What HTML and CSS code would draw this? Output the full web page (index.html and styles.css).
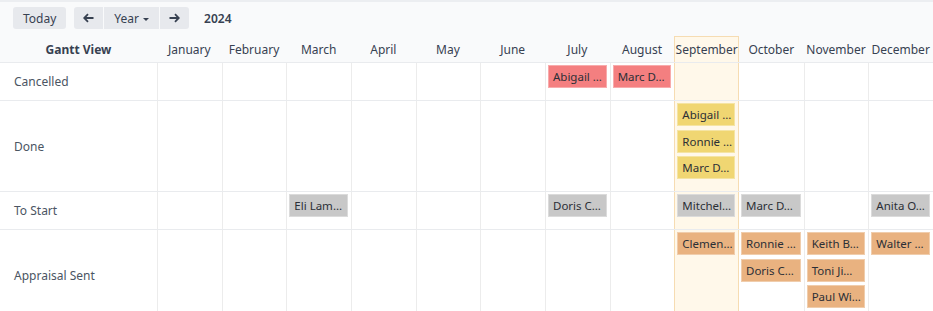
FILE: index.html
```html
<!DOCTYPE html>
<html lang="en">
<head>
  <meta charset="UTF-8" />
  <meta name="viewport" content="width=device-width, initial-scale=1" />
  <title>Gantt View</title>
  <link rel="stylesheet" href="styles.css">
</head>
<body>

<div class="toolbar">
  <button class="btn">Today</button>
  <div class="btn-group">
    <button class="btn btn-arrow">
      <svg width="11" height="10" viewBox="0 0 11 10"><path d="M10.5 5H1.5M5 1.2L1.2 5 5 8.8" fill="none" stroke="#374151" stroke-width="1.8"/></svg>
    </button>
    <button class="btn">Year <span class="caret"></span></button>
    <button class="btn btn-arrow">
      <svg width="11" height="10" viewBox="0 0 11 10"><path d="M0.5 5H9.5M6 1.2L9.8 5 6 8.8" fill="none" stroke="#374151" stroke-width="1.8"/></svg>
    </button>
  </div>
  <span class="period">2024</span>
</div>

<div class="gantt">
  <div class="row head">
    <div class="cell title">Gantt View</div>
    <div class="cell">January</div>
    <div class="cell">February</div>
    <div class="cell">March</div>
    <div class="cell">April</div>
    <div class="cell">May</div>
    <div class="cell">June</div>
    <div class="cell">July</div>
    <div class="cell">August</div>
    <div class="cell today">September</div>
    <div class="cell">October</div>
    <div class="cell">November</div>
    <div class="cell">December</div>
  </div>

  <div class="row">
    <div class="cell label">Cancelled</div>
    <div class="cell"></div>
    <div class="cell"></div>
    <div class="cell"></div>
    <div class="cell"></div>
    <div class="cell"></div>
    <div class="cell"></div>
    <div class="cell"><div class="pill red">Abigail …</div></div>
    <div class="cell"><div class="pill red">Marc D…</div></div>
    <div class="cell today"></div>
    <div class="cell"></div>
    <div class="cell"></div>
    <div class="cell"></div>
  </div>

  <div class="row">
    <div class="cell label">Done</div>
    <div class="cell"></div>
    <div class="cell"></div>
    <div class="cell"></div>
    <div class="cell"></div>
    <div class="cell"></div>
    <div class="cell"></div>
    <div class="cell"></div>
    <div class="cell"></div>
    <div class="cell today">
      <div class="pill yellow">Abigail …</div>
      <div class="pill yellow">Ronnie …</div>
      <div class="pill yellow">Marc D…</div>
    </div>
    <div class="cell"></div>
    <div class="cell"></div>
    <div class="cell"></div>
  </div>

  <div class="row">
    <div class="cell label">To Start</div>
    <div class="cell"></div>
    <div class="cell"></div>
    <div class="cell"><div class="pill grey">Eli Lam…</div></div>
    <div class="cell"></div>
    <div class="cell"></div>
    <div class="cell"></div>
    <div class="cell"><div class="pill grey">Doris C…</div></div>
    <div class="cell"></div>
    <div class="cell today"><div class="pill grey">Mitchel…</div></div>
    <div class="cell"><div class="pill grey">Marc D…</div></div>
    <div class="cell"></div>
    <div class="cell"><div class="pill grey">Anita O…</div></div>
  </div>

  <div class="row">
    <div class="cell label">Appraisal Sent</div>
    <div class="cell"></div>
    <div class="cell"></div>
    <div class="cell"></div>
    <div class="cell"></div>
    <div class="cell"></div>
    <div class="cell"></div>
    <div class="cell"></div>
    <div class="cell"></div>
    <div class="cell today"><div class="pill orange">Clemen…</div></div>
    <div class="cell">
      <div class="pill orange">Ronnie …</div>
      <div class="pill orange">Doris C…</div>
    </div>
    <div class="cell">
      <div class="pill orange">Keith B…</div>
      <div class="pill orange">Toni Ji…</div>
      <div class="pill orange">Paul Wi…</div>
    </div>
    <div class="cell"><div class="pill orange">Walter …</div></div>
  </div>
</div>

</body>
</html>
```

FILE: styles.css
```css
* { box-sizing: border-box; }
body {
  margin: 0;
  font-family: 'Noto Sans', sans-serif;
  font-size: 12px;
  color: #374151;
  background: #f9fafb;
  border-top: 2px solid #eceef1;
}
.toolbar {
  display: flex;
  align-items: center;
  height: 34px;
  padding: 0 13px 2px;
  gap: 8px;
}
.btn {
  font-family: inherit;
  font-size: 12px;
  color: #374151;
  background: #e7e9ed;
  border: none;
  border-radius: 3px;
  height: 22px;
  padding: 0 10px;
}
.btn-group {
  display: flex;
  gap: 1px;
  background: #f9fafb;
}
.btn-group .btn { border-radius: 0; }
.btn-group .btn:first-child { border-radius: 3px 0 0 3px; }
.btn-group .btn:last-child { border-radius: 0 3px 3px 0; }
.btn-arrow {
  width: 29px;
  padding: 0;
  display: flex;
  align-items: center;
  justify-content: center;
}
.caret {
  display: inline-block;
  vertical-align: middle;
  border-left: 3px solid transparent;
  border-right: 3px solid transparent;
  border-top: 3px solid #374151;
  margin-left: 1px;
}
.period {
  margin-left: 7px;
  font-weight: 600;
  color: #374151;
}
.gantt {
  background: #fff;
}
.row {
  display: grid;
  grid-template-columns: 157px repeat(12, 1fr);
  border-bottom: 1px solid #e9ebee;
}
.head {
  background: #f9fafb;
  height: 27px;
}
.head .cell {
  display: flex;
  align-items: center;
  justify-content: center;
  border-left: none;
  padding: 0;
}
.head .title { font-weight: bold; }
.cell {
  border-left: 1px solid #ececec;
  padding: 2px 3px 12px 2px;
  display: flex;
  flex-direction: column;
  gap: 3.5px;
  min-width: 0;
}
.cell:first-child { border-left: none; }
.cell.label {
  justify-content: center;
  padding: 0 0 0 14px;
  color: #4b5563;
}
.cell.today {
  background: #fff8ea;
  border-left: 1px solid #f6dcb2;
  border-right: 1px solid #f6dcb2;
}
.head .cell.today {
  border-left: 1px solid #f6dcb2;
  border-top: 1px solid #f6dcb2;
}
.cell.today + .cell { border-left: none; }
.pill {
  height: 23px;
  line-height: 21px;
  padding: 0 3px 0 4px;
  font-size: 11.5px;
  white-space: nowrap;
  overflow: hidden;
  color: #2b2f36;
  border: 1px solid rgba(255, 255, 255, 0.35);
}
.red { background: #f47f80; }
.yellow { background: #f0d672; }
.grey { background: #c8c8c8; }
.orange { background: #e9b280; }
```
